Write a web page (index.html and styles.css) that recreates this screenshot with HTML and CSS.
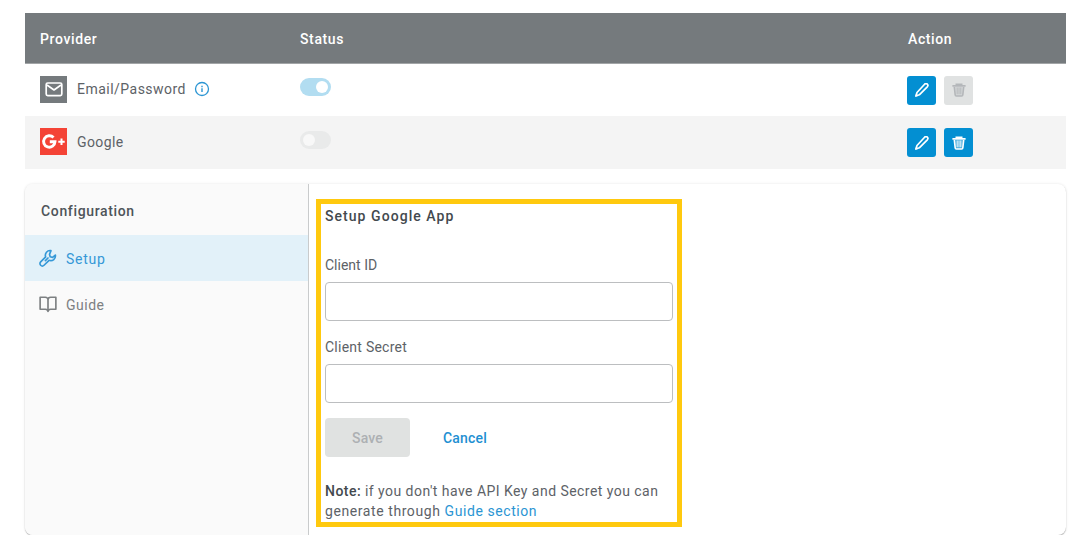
FILE: index.html
```
<!DOCTYPE html>
<html lang="en">
<head>
<meta charset="utf-8">
<title>Providers</title>
<link rel="stylesheet" href="styles.css">
</head>
<body>
<svg class="defs" aria-hidden="true">
  <symbol id="pencil" viewBox="0 0 14 14"><path d="M9.600 1.200q1.400-1.300 2.700-.1t0 2.700L4.300 11.800.9 13l1.100-3.500z" fill="none" stroke="currentColor" stroke-width="1.700" stroke-linejoin="round"/><path d="M1 11l2 2-2.600.5z" fill="currentColor"/></symbol>
  <symbol id="trash" viewBox="0 0 14 14"><path d="M.4 2.900h13.200M4.300 2.700V1.200h5.400v1.500" fill="none" stroke="currentColor" stroke-width="1.600"/><path d="M2.300 4l.9 8q.1 1 1.100 1h5.400q1 0 1.100-1l.9-8" fill="currentColor" fill-opacity=".3" stroke="currentColor" stroke-width="1.600"/><path d="M5.200 4.500v6.700M7 4.500v6.700M8.800 4.500v6.700" stroke="currentColor" stroke-width=".9"/></symbol>
</svg>
<main class="page">
  <section class="providers">
    <div class="row head"><span>Provider</span><span>Status</span><span>Action</span></div>
    <div class="row">
      <div class="provider">
        <span class="logo mail"><svg width="18" height="15" viewBox="0 0 18 15" fill="none" stroke="#fff" stroke-width="1.700" stroke-linejoin="round"><rect x="1.200" y="1" width="15.600" height="12.600" rx="1.500"/><path d="M2 3l7 5 7-5"/></svg></span>
        <span class="t-email">Email/Password</span>
        <svg class="info" width="16" height="16" viewBox="0 0 16 16"><circle cx="8" cy="8" r="6.500" fill="none" stroke="#2b95d3" stroke-width="1.300"/><path d="M8 7.200v3.800M8 4.800v1.400" stroke="#2b95d3" stroke-width="1.400"/></svg>
      </div>
      <span class="toggle on"></span>
      <div class="actions"><button class="act"><svg width="14" height="14"><use href="#pencil"/></svg></button><button class="act off" disabled><svg width="14" height="14"><use href="#trash"/></svg></button></div>
    </div>
    <div class="row alt">
      <div class="provider">
        <span class="logo google"><svg width="25" height="18" viewBox="0 0 25 18"><path d="M12.500 4.600A5.700 5.700 0 1 0 14 8.700H8.800" fill="none" stroke="#fff" stroke-width="2.900"/><path d="M20.500 5.500v6.400M17.300 8.700h6.400" stroke="#fff" stroke-width="2"/></svg></span>
        <span class="t-google">Google</span>
      </div>
      <span class="toggle"></span>
      <div class="actions"><button class="act"><svg width="14" height="14"><use href="#pencil"/></svg></button><button class="act"><svg width="14" height="14"><use href="#trash"/></svg></button></div>
    </div>
  </section>
  <section class="card">
    <nav class="side">
      <h2>Configuration</h2>
      <a class="item active"><svg width="18" height="18" viewBox="0 0 24 24" fill="none" stroke="currentColor" stroke-width="2.200" stroke-linejoin="round" stroke-linecap="round"><path d="M16 2.200a6.300 6.300 0 0 0-7.100 8.400l-6.700 6.600a3 3 0 0 0 4.500 4.500l6.700-6.600a6.300 6.300 0 0 0 8.400-7.100l-3.600 3.200-3.300-.8-.9-3.300zM8.500 15.500l3.500-3.500"/></svg><span class="t-setup">Setup</span></a>
      <a class="item"><svg width="18" height="18" viewBox="0 0 24 24" fill="none" stroke="currentColor" stroke-width="2.200" stroke-linejoin="round"><path d="M1.500 3H8.500a3.500 3.500 0 0 1 3.500 3.500V22a3.500 3.500 0 0 0-3.500-3H1.500zM22.500 3H15.500A3.500 3.500 0 0 0 12 6.500V22a3.500 3.500 0 0 1 3.500-3h7z"/></svg><span class="t-guide">Guide</span></a>
    </nav>
    <div class="content">
      <form class="setup">
        <h3>Setup Google App</h3>
        <label for="cid">Client ID</label>
        <input id="cid" type="text">
        <label class="t-secret" for="secret">Client Secret</label>
        <input id="secret" type="text">
        <div class="buttons"><button type="button" class="save" disabled>Save</button><a class="cancel">Cancel</a></div>
        <p class="note"><span class="t-line1"><b>Note:</b> if you don't have API Key and Secret you can</span><br>generate through <a>Guide section</a></p>
      </form>
    </div>
  </section>
</main>
</body>
</html>
```
FILE: styles.css
```
* { box-sizing: border-box; }
body { margin: 0; background: #fff; color: #5d6267; font: 14px/20px Roboto, "Liberation Sans", sans-serif; }
.defs { display: none; }
.page { padding: 13px 12px 0 25px; }
.row { display: grid; grid-template-columns: 260px 608px 1fr; align-items: center; height: 52px; padding-left: 15px; }
.head { height: 51px; padding-top: 2px; background: #757a7d; color: #fff; font-weight: 500; letter-spacing: .62px; border-bottom: 1px solid #a2a5a7; }
.alt { height: 53px; background: #f4f4f4; }
.provider { display: flex; align-items: center; margin-bottom: 2px; }
.logo { display: flex; align-items: center; justify-content: center; width: 27px; height: 27px; margin-right: 10px; }
.mail { background: #757a7d; }
.google { background: #f44336; }
.t-email { letter-spacing: .48px; }
.t-google { letter-spacing: .38px; }
.info { margin-left: 8px; }
.toggle { display: flex; align-items: center; width: 31px; height: 18px; margin-bottom: 6px; padding: 0 3px; border-radius: 9px; background: #e9eaea; }
.toggle::after { content: ""; width: 12px; height: 12px; border-radius: 50%; background: #f8f8f8; }
.toggle.on { justify-content: flex-end; background: #b2ddf1; }
.toggle.on::after { background: #fff; }
.actions { display: flex; gap: 8px; margin-left: -1px; }
.act { display: flex; align-items: center; justify-content: center; width: 29px; height: 29px; padding: 0; border: 0; border-radius: 3px; background: #038fd2; color: #fff; }
.act.off { background: #e0e2e2; color: #b4b7ba; }
.card { display: flex; height: 351px; margin-top: 15px; border-radius: 8px; overflow: hidden; box-shadow: 0 1px 1px #b4b4b4, 0 0 3px rgba(0,0,0,.1); }
.side { width: 284px; border-right: 1px solid #c9cbcc; background: #fafafa; }
h2, h3 { margin: 0; font-size: 14px; font-weight: 500; }
h2 { height: 51px; padding: 17px 16px 0; color: #4e5459; line-height: 20px; letter-spacing: .65px; }
.item { display: flex; align-items: center; gap: 9px; height: 46px; padding: 2px 0 0 14px; color: #7d8082; }
.item svg { margin-bottom: 2px; }
.item.active { background: #e2f1f9; color: #3598d7; }
.t-setup { letter-spacing: .75px; }
.t-guide { letter-spacing: .5px; }
.content { flex: 1; padding: 15px 7px; }
.setup { width: 366px; height: 328px; padding: 2px 4px 0; border: 5px solid #ffc90e; }
h3 { color: #43494e; letter-spacing: 1.05px; }
label { display: block; margin-top: 29px; }
.t-secret { margin-top: 16px; letter-spacing: .25px; }
input { display: block; width: 348px; height: 39px; margin-top: 7px; border: 1px solid #bcbec0; border-radius: 4px; background: #fff; }
.buttons { display: flex; align-items: center; gap: 33px; margin-top: 15px; }
.save { width: 85px; height: 39px; padding: 0; border: 0; border-radius: 4px; background: #e0e2e1; color: #adb0b3; font: inherit; font-weight: 500; letter-spacing: .15px; }
.cancel { color: #1e90d2; font-weight: 500; letter-spacing: .2px; }
.note { margin: 24px 0 0; white-space: nowrap; letter-spacing: .58px; }
.t-line1 { letter-spacing: .46px; }
.note b { font-weight: 500; color: #43494e; }
.note a { color: #2b95d3; }
```
